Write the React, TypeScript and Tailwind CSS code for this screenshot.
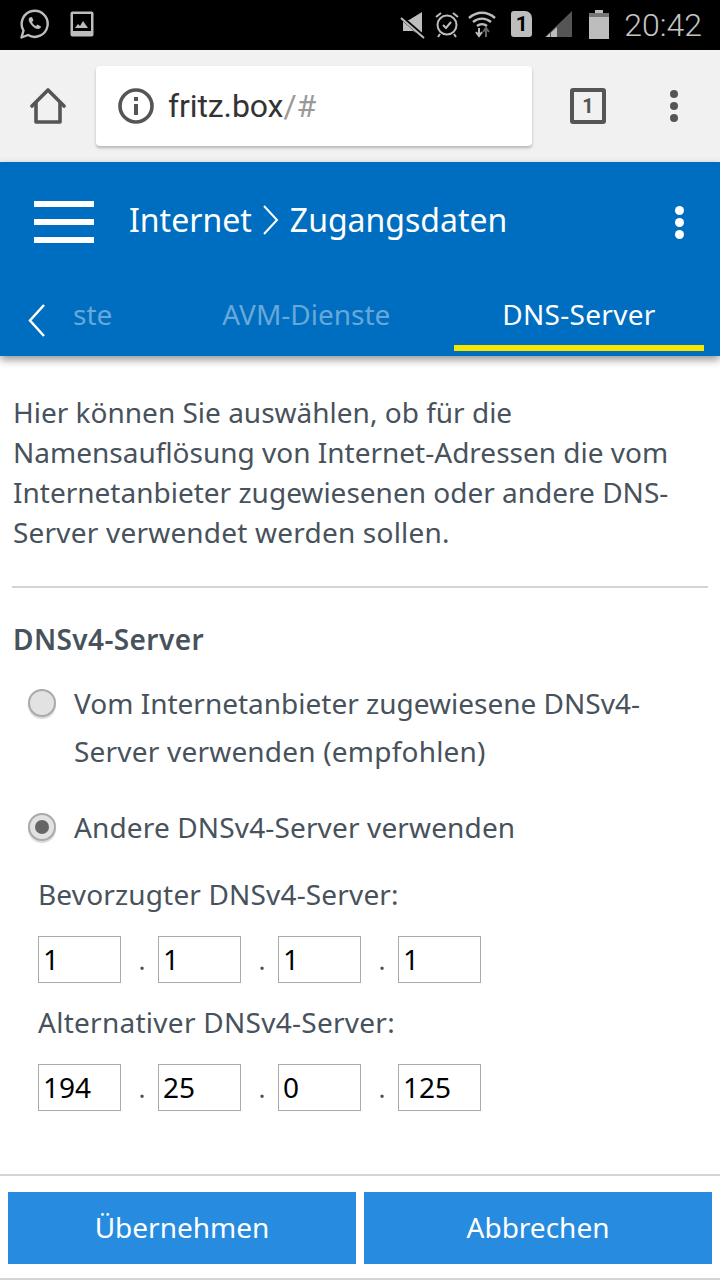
import React from 'react';

const StatusBar = () => (
  <div className="h-[50px] bg-black flex items-center text-[#bdbdbd] shrink-0">
    <svg className="ml-[19px] -mt-[2px]" width="30" height="30" viewBox="0 0 30 30" fill="none">
      <path d="M2.500 28.500l2-7A13 13 0 1 1 9 26z" stroke="#bdbdbd" strokeWidth="2.400" strokeLinejoin="round" />
      <path d="M10.500 8.500c-1.500 1.500-1 4 1.500 7s5 4.500 7 4.500c1.500 0 3-1 3-2.500l-3.500-2-1.500 1.500c-1.500-.5-3.500-2.500-4-4l1.500-1.500-1.500-3.500z" fill="#bdbdbd" />
    </svg>
    <svg className="ml-[21px] -mt-[2px]" width="24" height="26" viewBox="0 0 24 26">
      <rect x="0.500" y="0.500" width="23" height="25" rx="2" fill="#bdbdbd" />
      <rect x="3" y="3" width="18" height="17" fill="#000" />
      <path d="M5 17l3-4 2 2 3-5 5 7z" fill="#bdbdbd" />
    </svg>
    <div className="ml-auto flex items-center">
      <svg className="-ml-[2px]" width="26" height="28" viewBox="0 0 26 28" fill="#bdbdbd">
        <path d="M0 9h6l13-8v24l-9-5H0z" transform="translate(3 0)" />
        <path d="M1 6l23 20" stroke="#000" strokeWidth="4" />
        <path d="M1 7l23 20" stroke="#bdbdbd" strokeWidth="2" />
      </svg>
      <svg className="ml-[8px] -mt-[2px]" width="26" height="28" viewBox="0 0 26 28" fill="none" stroke="#bdbdbd" strokeWidth="2">
        <circle cx="13" cy="15" r="9.500" />
        <path d="M9 15l3 3 5-6" />
        <path d="M2 7l5-4M24 7l-5-4M6 24l-2 3M20 24l2 3" />
      </svg>
      <svg className="ml-[8px] -mt-[2px]" width="28" height="30" viewBox="0 0 28 30" fill="none" stroke="#bdbdbd" strokeWidth="2.400">
        <path d="M1 9c8-7 18-7 26 0" />
        <path d="M5 13c5.500-4.500 12.500-4.500 18 0" />
        <path d="M9 17c3-2.500 7-2.500 10 0" />
        <path d="M11 19v8M8 23l3 4 3-4" strokeWidth="2" />
        <path d="M18 28v-9M15 23l3-4 3 4" stroke="#666" strokeWidth="2" />
      </svg>
      <div className="ml-[15px] -mt-[2px] w-[21px] h-[26px] bg-[#bdbdbd] rounded-[3px] rounded-tr-[7px] flex items-center justify-center text-black text-[21px] font-bold leading-none font-['Roboto',sans-serif]">
        1
      </div>
      <svg className="ml-[13px] -mt-[2px]" width="28" height="28" viewBox="0 0 28 28">
        <path d="M27 1v26H0z" fill="#555" />
        <path d="M12 27V17l-6 5.500V27zM5 27v-4l-4 4z" fill="#bdbdbd" />
      </svg>
      <svg className="ml-[16px] -mt-[2px]" width="20" height="30" viewBox="0 0 20 30">
        <path d="M6 1h8v3h6v26H0V4h6z" fill="#bdbdbd" />
        <rect x="0" y="4" width="20" height="4" fill="#777" />
      </svg>
      <span className="ml-[15px] mr-[18px] text-[32px] leading-none font-['Roboto',sans-serif] font-light text-[#c4c4c4]">20:42</span>
    </div>
  </div>
);

const BrowserBar = () => (
  <div className="h-[112px] bg-[#f1f1f1] flex items-center shrink-0">
    <svg className="ml-[30px]" width="36" height="36" viewBox="0 0 36 36" fill="none" stroke="#555" strokeWidth="3.600" strokeLinejoin="round" strokeLinecap="round">
      <path d="M2 18L18 2l16 16" />
      <path d="M6 15v19h24V15" />
    </svg>
    <div className="ml-[30px] w-[436px] h-[80px] bg-white rounded-[4px] shadow-[0_2px_3px_rgba(0,0,0,0.25)] flex items-center">
      <svg className="ml-[22px]" width="36" height="36" viewBox="0 0 36 36" fill="none">
        <circle cx="18" cy="18" r="16" stroke="#555" strokeWidth="3.600" />
        <rect x="16" y="16" width="4" height="11" fill="#555" />
        <rect x="16" y="9" width="4" height="4" fill="#555" />
      </svg>
      <span className="ml-[14px] text-[32px] leading-none font-['Roboto',sans-serif] text-[#333] tracking-[-0.1px]">
        fritz.box<span className="text-[#999]">/#</span>
      </span>
    </div>
    <div className="ml-[38px] w-[36px] h-[36px] border-[4px] border-[#555] rounded-[3px] flex items-center justify-center text-[#555] text-[20px] font-bold leading-none font-['Roboto',sans-serif]">
      1
    </div>
    <div className="ml-[64px] flex flex-col gap-[4px]">
      <div className="w-[8px] h-[8px] rounded-full bg-[#555]" />
      <div className="w-[8px] h-[8px] rounded-full bg-[#555]" />
      <div className="w-[8px] h-[8px] rounded-full bg-[#555]" />
    </div>
  </div>
);

const BlueHeader = () => (
  <div className="h-[194px] bg-[#006ec0] shrink-0 shadow-[0_4px_8px_rgba(0,0,0,0.4)] relative z-10 flex flex-col">
    <div className="flex items-center h-[116px]">
      <div className="ml-[34px] w-[60px] flex flex-col gap-[12px] mt-[4px]">
        <div className="h-[6px] bg-white" />
        <div className="h-[6px] bg-white" />
        <div className="h-[6px] bg-white" />
      </div>
      <div className="ml-[35px] flex items-center text-white text-[32px] leading-none">
        <span>Internet</span>
        <svg className="mx-[11px]" width="16" height="30" viewBox="0 0 16 30" fill="none" stroke="#fff" strokeWidth="2">
          <path d="M1 1l13 14L1 29" />
        </svg>
        <span>Zugangsdaten</span>
      </div>
      <div className="ml-auto mr-[36px] flex flex-col gap-[3px] mt-[4px]">
        <div className="w-[9px] h-[9px] rounded-full bg-white" />
        <div className="w-[9px] h-[9px] rounded-full bg-white" />
        <div className="w-[9px] h-[9px] rounded-full bg-white" />
      </div>
    </div>
    <div className="flex-1 flex text-[28px] leading-none">
      <svg className="ml-[28px] mt-[26px]" width="18" height="34" viewBox="0 0 18 34" fill="none" stroke="#fff" strokeWidth="2.500">
        <path d="M16 1L2 16.500 16 32" />
      </svg>
      <span className="ml-[27px] mt-[22px] text-[#66a8d9]">ste</span>
      <span className="ml-[110px] mt-[22px] text-[#66a8d9]">AVM-Dienste</span>
      <div className="ml-auto mr-[16px] w-[250px] h-[73px] border-b-[6px] border-[#f6e600] text-white text-center pt-[22px] tracking-[0.3px]">DNS-Server</div>
    </div>
  </div>
);

const Radio = ({ checked }: { checked?: boolean }) => (
  <div className="w-[28px] h-[28px] shrink-0 rounded-full bg-[#e2e2e2] border-2 border-[#aaa] shadow-[0_2px_1px_rgba(0,0,0,0.15)] flex items-center justify-center">
    {checked && <div className="w-[14px] h-[14px] rounded-full bg-[#666]" />}
  </div>
);

const IpRow = ({ values }: { values: string[] }) => (
  <div className="flex h-[47px]">
    {values.map((v, i) => (
      <React.Fragment key={i}>
        {i > 0 && <div className="w-[37px] pl-[5px] text-center text-[26px] leading-[47px] text-[#47525c] pt-[1px]">.</div>}
        <div className="w-[83px] h-[47px] border border-[#aaa] pl-[4px] text-[28px] leading-[44px] text-black">{v}</div>
      </React.Fragment>
    ))}
  </div>
);

const App = () => {
  return (
    <div className="w-[720px] h-[1280px] bg-white overflow-hidden flex flex-col font-['Noto_Sans',sans-serif] text-[#47525c]">
      <StatusBar />
      <BrowserBar />
      <BlueHeader />
      <div className="px-[13px] pt-[36px] text-[28px] leading-[40px] shrink-0">
        Hier können Sie auswählen, ob für die<br />
        Namensauflösung von Internet-Adressen die vom<br />
        Internetanbieter zugewiesenen oder andere DNS-<br />
        <span className="tracking-[0.2px]">Server verwendet werden sollen.</span>
      </div>
      <div className="mx-[12px] mt-[34px] h-[2px] bg-[#d4d4d4] shrink-0" />
      <div className="ml-[13px] mt-[31px] text-[28px] leading-[40px] font-semibold tracking-[0.4px] shrink-0">DNSv4-Server</div>
      <div className="ml-[28px] mt-[20px] flex text-[28px] leading-[48px] shrink-0">
        <div className="mt-[10px]"><Radio /></div>
        <div className="ml-[18px]">Vom Internetanbieter zugewiesene DNSv4-<br /><span className="tracking-[0.2px]">Server verwenden (empfohlen)</span></div>
      </div>
      <div className="ml-[28px] mt-[28px] flex text-[28px] leading-[48px] shrink-0">
        <div className="mt-[10px]"><Radio checked /></div>
        <div className="ml-[18px] tracking-[0.14px]">Andere DNSv4-Server verwenden</div>
      </div>
      <div className="ml-[38px] mt-[23px] flex flex-col text-[28px] leading-[40px] shrink-0">
        <div className="mb-[22px] tracking-[0.16px]">Bevorzugter DNSv4-Server:</div>
        <IpRow values={['1', '1', '1', '1']} />
        <div className="mt-[19px] mb-[22px] tracking-[0.27px]">Alternativer DNSv4-Server:</div>
        <IpRow values={['194', '25', '0', '125']} />
      </div>
      <div className="mt-auto border-t-2 border-b-2 border-[#d4d4d4] h-[106px] flex gap-[8px] px-[8px] pt-[16px] shrink-0">
        <button className="flex-1 h-[72px] pb-[2px] bg-[#278ce0] text-white text-[28px]">Übernehmen</button>
        <button className="flex-1 h-[72px] pb-[2px] bg-[#278ce0] text-white text-[28px]">Abbrechen</button>
      </div>
    </div>
  );
};

export default App;
